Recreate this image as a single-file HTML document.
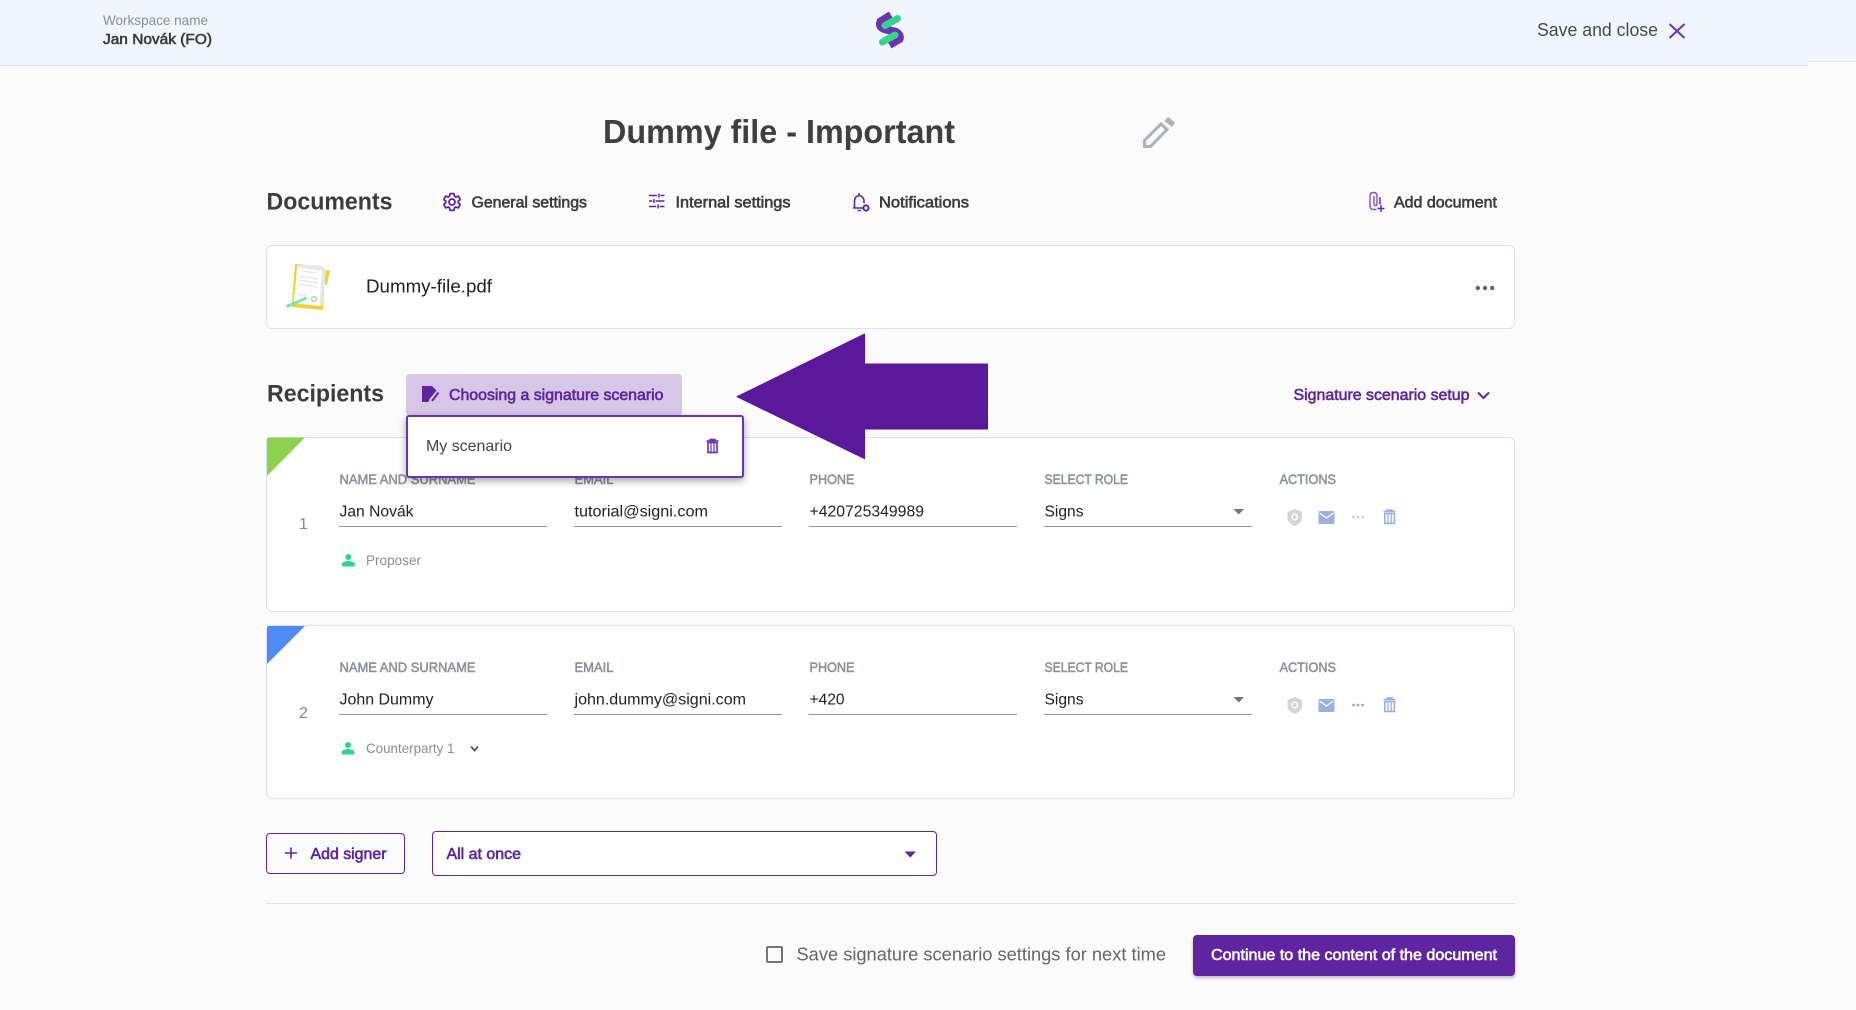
<!DOCTYPE html>
<html lang="en">
<head>
<meta charset="utf-8">
<title>Dummy file - Important</title>
<style>
html,body{margin:0;padding:0;width:1856px;height:1010px;overflow:hidden;background:#fbfbfb}
.b{position:absolute;box-sizing:border-box}
svg{position:absolute;left:0;top:0}
text{font-family:"Liberation Sans",sans-serif}
.m{stroke:currentColor;stroke-width:.6px}
.h{font-weight:bold;stroke:none}
.lab{font-size:14px;fill:#8a9299;color:#8a9299;stroke:currentColor;stroke-width:.55px}
.val{font-size:16px;fill:#222}
.pu{fill:#5f249f;color:#5f249f}
.dk{fill:#3c3c3c;color:#3c3c3c}
</style>
</head>
<body>
<div class="b" style="left:1808px;top:0;width:48px;height:62px;background:#f1f5fd;border-bottom:1px solid #dbe2ee"></div>
<div class="b" style="left:1808px;top:62px;width:48px;height:34px;background:#fcfcfc"></div>
<div class="b" style="left:0;top:0;width:1808px;height:66px;background:#f1f5fd;border-bottom:1px solid #dbe2ee"></div>

<div class="b" style="left:266px;top:245px;width:1249px;height:84px;background:#fff;border:1px solid #d8e2f0;border-radius:6px"></div>
<div class="b" style="left:266px;top:437px;width:1249px;height:175px;background:#fff;border:1px solid #d8e2f0;border-radius:6px"></div>
<div class="b" style="left:266px;top:625px;width:1249px;height:174px;background:#fff;border:1px solid #d8e2f0;border-radius:6px"></div>
<div class="b" style="left:406px;top:374px;width:276px;height:42px;background:#d5c7e5;border-radius:4px"></div>
<div class="b" style="left:266px;top:833px;width:139px;height:41px;border:1.5px solid #5f249f;border-radius:4px"></div>
<div class="b" style="left:432px;top:831px;width:505px;height:45px;background:#fff;border:1.5px solid #5f249f;border-radius:4px"></div>
<div class="b" style="left:266px;top:903px;width:1249px;height:1px;background:#e2e2e2"></div>
<div class="b" style="left:765.500px;top:945.500px;width:17px;height:17px;border:2px solid #757575;border-radius:2px"></div>
<div class="b" style="left:1193px;top:935px;width:322px;height:41px;background:#5f249f;border-radius:4px;box-shadow:0 2px 3px rgba(0,0,0,.25)"></div>

<svg width="1856" height="1010" viewBox="0 0 1856 1010">
  <!-- header -->
  <text x="103" y="25" font-size="14" fill="#8a8f93" textLength="105" lengthAdjust="spacingAndGlyphs">Workspace name</text>
  <text class="m dk" x="103" y="44" font-size="15" textLength="109" lengthAdjust="spacingAndGlyphs">Jan Novák (FO)</text>
  <path d="M891 15L880.500 21.500Q878.500 26.500 884 29L896 32Q901 35 899.500 39L889.500 45" fill="none" stroke="#6a35b5" stroke-width="8"/>
  <path d="M885 25.500L897.500 18.500M882.500 42L895 35" fill="none" stroke="#34d68a" stroke-width="7" stroke-linecap="round"/>
  <text x="1537" y="36" font-size="18" fill="#4a4a4a" textLength="121" lengthAdjust="spacingAndGlyphs">Save and close</text>
  <path d="M1669.500 24L1684.500 38M1684.500 24L1669.500 38" stroke="#6a35b5" stroke-width="2" fill="none"/>

  <!-- title -->
  <text class="h" x="603" y="143" font-size="33" fill="#3f3f3f" textLength="352" lengthAdjust="spacingAndGlyphs">Dummy file - Important</text>
  <path d="M1144.500 146.500V140.500L1161 124L1167 129.500L1150.500 146.500Z" fill="none" stroke="#a9b3ba" stroke-width="3"/>
  <path d="M1168 117L1175 122.500L1172 127L1164.500 121Z" fill="#a9b3ba"/>

  <!-- documents row -->
  <text class="h" x="266.500" y="209.500" font-size="24" fill="#3c3c3c" textLength="126" lengthAdjust="spacingAndGlyphs">Documents</text>
  <g transform="translate(441.500,191.500) scale(.875)" fill="none" stroke="#5f249f" stroke-width="2">
    <path d="M19.14 12.94c.04-.3.06-.61.06-.94 0-.32-.02-.64-.07-.94l2.03-1.58c.18-.14.23-.41.12-.61l-1.92-3.32c-.12-.22-.37-.29-.59-.22l-2.39.96c-.5-.38-1.03-.7-1.62-.94l-.36-2.54c-.04-.24-.24-.41-.48-.41h-3.84c-.24 0-.43.17-.47.41l-.36 2.54c-.59.24-1.13.57-1.62.94l-2.39-.96c-.22-.08-.47 0-.59.22L2.74 8.87c-.12.21-.08.47.12.61l2.03 1.58c-.05.3-.09.63-.09.94s.02.64.07.94l-2.03 1.58c-.18.14-.23.41-.12.61l1.92 3.32c.12.22.37.29.59.22l2.39-.96c.5.38 1.03.7 1.62.94l.36 2.54c.05.24.24.41.48.41h3.84c.24 0 .44-.17.47-.41l.36-2.54c.59-.24 1.13-.56 1.62-.94l2.39.96c.22.08.47 0 .59-.22l1.92-3.32c.12-.22.07-.47-.12-.61l-2.01-1.58z"/>
    <circle cx="12" cy="12" r="3.400"/>
  </g>
  <text class="m dk" x="471.500" y="207.500" font-size="16" textLength="115.500" lengthAdjust="spacingAndGlyphs">General settings</text>
  <g stroke="#5f249f" stroke-width="1.500" fill="none">
    <path d="M649 195.500H657M660.500 195.500H664.500M659 193.500V197.500"/>
    <path d="M649 201H652.500M655.500 201H664.500M654 199V203"/>
    <path d="M649 206.500H656M659.500 206.500H664.500M658 204.500V208.500"/>
  </g>
  <text class="m dk" x="675.500" y="207.500" font-size="16" textLength="115" lengthAdjust="spacingAndGlyphs">Internal settings</text>
  <path d="M853 208H863M854.500 208V201Q854.500 196.500 859 195.500V193Q859 195.500 859.500 195.500Q863.500 196.500 864 200.500V203" fill="none" stroke="#5f249f" stroke-width="1.600"/>
  <circle cx="866" cy="208" r="2.600" fill="none" stroke="#5f249f" stroke-width="2"/>
  <path d="M857.500 210.500H861" stroke="#5f249f" stroke-width="1.400"/>
  <text class="m dk" x="879" y="207.500" font-size="16" textLength="90" lengthAdjust="spacingAndGlyphs">Notifications</text>
  <path d="M1376.500 209.500H1373.500Q1370 209.500 1370 205.500V196Q1370 192.500 1373.500 192.500Q1377 192.500 1377 196V204Q1377 205.500 1375.500 205.500Q1374 205.500 1374 204V196" fill="none" stroke="#8a4cc0" stroke-width="1.400"/>
  <path d="M1380 204.500V197M1377.500 208.500H1384.500M1381 205V212" fill="none" stroke="#5f249f" stroke-width="1.400"/>
  <text class="m dk" x="1394" y="207.500" font-size="16" textLength="103" lengthAdjust="spacingAndGlyphs">Add document</text>

  <!-- document card -->
  <path d="M295 264L308 265L325 270L323 310L291.700 307Z" fill="#efcf3a"/>
  <path d="M325 270L330 270.500L327 285L325 285Z" fill="#efcf3a"/>
  <path d="M297 265L321 265.500L326 270L322 306L294 303Z" fill="#e6e6e6"/>
  <path d="M297.500 267L322 271L319.500 306L293.500 303Z" fill="#fdfdfb"/>
  <path d="M302 271L316 273M299 276L318 279M298.500 280L318 283M298.500 284L317 287M297.500 294L307 295.500" stroke="#e4e4e4" stroke-width="1.200" fill="none"/>
  <circle cx="314" cy="299" r="2.400" fill="none" stroke="#c0c0c0" stroke-width="1.300"/>
  <path d="M286.500 306.500L306.500 298" stroke="#7fe3b6" stroke-width="3"/>
  <text x="366" y="292.500" font-size="18" fill="#222" textLength="126" lengthAdjust="spacingAndGlyphs">Dummy-file.pdf</text>
  <g fill="#666"><circle cx="1477.800" cy="288" r="2.200"/><circle cx="1485" cy="288" r="2.200"/><circle cx="1492.200" cy="288" r="2.200"/></g>

  <!-- recipients row -->
  <text class="h" x="267" y="401.500" font-size="24" fill="#3c3c3c" textLength="117" lengthAdjust="spacingAndGlyphs">Recipients</text>
  <path d="M422 386H432L436.500 390.500L429.500 399L428.500 402H422Z" fill="#5f249f"/>
  <path d="M438.500 392.500L432 401" stroke="#5f249f" stroke-width="2"/>
  <text class="m pu" x="449" y="400" font-size="16" textLength="214.500" lengthAdjust="spacingAndGlyphs">Choosing a signature scenario</text>
  <text class="m pu" x="1293.500" y="400" font-size="16" textLength="176" lengthAdjust="spacingAndGlyphs">Signature scenario setup</text>
  <path d="M1478 392.500L1483.500 398L1489 392.500" fill="none" stroke="#5f249f" stroke-width="2"/>

  <!-- signer 1 -->
  <path d="M267 438.500Q267 437.500 269 437.500H305L267 476Z" fill="#8fd14f"/>
  <text class="lab" x="339.500" y="484" textLength="136" lengthAdjust="spacingAndGlyphs">NAME AND SURNAME</text>
  <text class="lab" x="574.500" y="484" textLength="39" lengthAdjust="spacingAndGlyphs">EMAIL</text>
  <text class="lab" x="809.500" y="484" textLength="45" lengthAdjust="spacingAndGlyphs">PHONE</text>
  <text class="lab" x="1044.500" y="484" textLength="83.500" lengthAdjust="spacingAndGlyphs">SELECT ROLE</text>
  <text class="lab" x="1279.500" y="484" textLength="56.500" lengthAdjust="spacingAndGlyphs">ACTIONS</text>
  <text x="299" y="529" font-size="16" fill="#888">1</text>
  <text class="val" x="339.500" y="516.500" textLength="74" lengthAdjust="spacingAndGlyphs">Jan Novák</text>
  <text class="val" x="574.500" y="516.500" textLength="133.500" lengthAdjust="spacingAndGlyphs">tutorial@signi.com</text>
  <text class="val" x="809.500" y="516.500" textLength="114.500" lengthAdjust="spacingAndGlyphs">+420725349989</text>
  <text class="val" x="1044.500" y="516.500" textLength="39" lengthAdjust="spacingAndGlyphs">Signs</text>
  <g fill="#949494">
    <rect x="339" y="526" width="208" height="1"/><rect x="574" y="526" width="208" height="1"/>
    <rect x="809" y="526" width="208" height="1"/><rect x="1044" y="526" width="208" height="1"/>
  </g>
  <path d="M1233.500 509H1244L1238.750 514.500Z" fill="#757575"/>
  <g fill="#2fd688"><circle cx="348.400" cy="557" r="3"/><path d="M342 566.500V564Q342 561.500 348.400 561Q354.700 561.500 354.700 564V566.500Z"/></g>
  <text x="366" y="565" font-size="14" fill="#8d8d8d" textLength="55" lengthAdjust="spacingAndGlyphs">Proposer</text>
  <g>
    <path d="M1294.800 509L1302 512V518Q1302 523 1294.800 526Q1287.500 523 1287.500 518V512Z" fill="#d5d5d5"/>
    <circle cx="1294.800" cy="517" r="2.700" fill="none" stroke="#fff" stroke-width="1.500"/>
    <rect x="1318.500" y="511" width="16" height="13" rx="1.500" fill="#9ab1df"/>
    <path d="M1319.500 513L1326.500 518L1333.500 513" fill="none" stroke="#fff" stroke-width="1.200"/>
    <g fill="#cfcfcf"><circle cx="1353.500" cy="517" r="1.400"/><circle cx="1358" cy="517" r="1.400"/><circle cx="1362.500" cy="517" r="1.400"/></g>
    <path d="M1383.500 511.500H1395.500M1387 511V510H1392V511" fill="none" stroke="#9ab1df" stroke-width="1.500"/>
    <rect x="1384.800" y="513.500" width="9.600" height="10" fill="none" stroke="#9ab1df" stroke-width="1.600"/>
    <path d="M1388 514V523M1391.200 514V523" stroke="#9ab1df" stroke-width="1.300"/>
  </g>

  <!-- signer 2 -->
  <path d="M267 627Q267 626 269 626H305L267 664Z" fill="#4f8bf5"/>
  <text class="lab" x="339.500" y="672" textLength="136" lengthAdjust="spacingAndGlyphs">NAME AND SURNAME</text>
  <text class="lab" x="574.500" y="672" textLength="39" lengthAdjust="spacingAndGlyphs">EMAIL</text>
  <text class="lab" x="809.500" y="672" textLength="45" lengthAdjust="spacingAndGlyphs">PHONE</text>
  <text class="lab" x="1044.500" y="672" textLength="83.500" lengthAdjust="spacingAndGlyphs">SELECT ROLE</text>
  <text class="lab" x="1279.500" y="672" textLength="56.500" lengthAdjust="spacingAndGlyphs">ACTIONS</text>
  <text x="299" y="718" font-size="16" fill="#888">2</text>
  <text class="val" x="339.500" y="704.500" textLength="94" lengthAdjust="spacingAndGlyphs">John Dummy</text>
  <text class="val" x="574.500" y="704.500" textLength="171.500" lengthAdjust="spacingAndGlyphs">john.dummy@signi.com</text>
  <text class="val" x="809.500" y="704.500" textLength="35" lengthAdjust="spacingAndGlyphs">+420</text>
  <text class="val" x="1044.500" y="704.500" textLength="39" lengthAdjust="spacingAndGlyphs">Signs</text>
  <g fill="#949494">
    <rect x="339" y="714" width="208" height="1"/><rect x="574" y="714" width="208" height="1"/>
    <rect x="809" y="714" width="208" height="1"/><rect x="1044" y="714" width="208" height="1"/>
  </g>
  <path d="M1233.500 697H1244L1238.750 702.500Z" fill="#757575"/>
  <g fill="#2fd688"><circle cx="348" cy="745" r="3"/><path d="M341.800 754.500V752Q341.800 749.500 348 749Q354.300 749.500 354.300 752V754.500Z"/></g>
  <text x="366" y="753" font-size="14" fill="#8d8d8d" textLength="88.500" lengthAdjust="spacingAndGlyphs">Counterparty 1</text>
  <path d="M471 746.500L474.500 750.500L478 746.500" fill="none" stroke="#5f249f" stroke-width="1.600"/>
  <g transform="translate(0,188)">
    <path d="M1294.800 509L1302 512V518Q1302 523 1294.800 526Q1287.500 523 1287.500 518V512Z" fill="#d5d5d5"/>
    <circle cx="1294.800" cy="517" r="2.700" fill="none" stroke="#fff" stroke-width="1.500"/>
    <rect x="1318.500" y="511" width="16" height="13" rx="1.500" fill="#9ab1df"/>
    <path d="M1319.500 513L1326.500 518L1333.500 513" fill="none" stroke="#fff" stroke-width="1.200"/>
    <g fill="#9aa8c8"><circle cx="1353.500" cy="517" r="1.400"/><circle cx="1358" cy="517" r="1.400"/><circle cx="1362.500" cy="517" r="1.400"/></g>
    <path d="M1383.500 511.500H1395.500M1387 511V510H1392V511" fill="none" stroke="#9ab1df" stroke-width="1.500"/>
    <rect x="1384.800" y="513.500" width="9.600" height="10" fill="none" stroke="#9ab1df" stroke-width="1.600"/>
    <path d="M1388 514V523M1391.200 514V523" stroke="#9ab1df" stroke-width="1.300"/>
  </g>

  <!-- bottom -->
  <path d="M291 847.500V858.500M285 853H297" stroke="#5f249f" stroke-width="1.600" fill="none"/>
  <text class="m pu" x="310.500" y="859" font-size="16" textLength="76" lengthAdjust="spacingAndGlyphs">Add signer</text>
  <text class="m pu" x="446.500" y="859" font-size="16" textLength="74.500" lengthAdjust="spacingAndGlyphs">All at once</text>
  <path d="M904.500 851.500H916L910.250 857.500Z" fill="#5f249f"/>
  <text x="796.500" y="960.500" font-size="18" fill="#666" textLength="369.500" lengthAdjust="spacingAndGlyphs">Save signature scenario settings for next time</text>
  <text class="m" x="1211" y="960" font-size="16" fill="#fff" color="#fff" textLength="286" lengthAdjust="spacingAndGlyphs">Continue to the content of the document</text>
</svg>

<!-- popup -->
<div class="b" style="left:406px;top:415px;width:337.500px;height:63px;background:#fff;border:2px solid #6a35b0;border-radius:3px;box-shadow:0 3px 8px rgba(0,0,0,.35)"></div>
<svg width="1856" height="1010" viewBox="0 0 1856 1010">
  <text x="426" y="451" font-size="16" fill="#444" textLength="86" lengthAdjust="spacingAndGlyphs">My scenario</text>
  <path d="M706.500 441H718.500M710 440.500V439.500H715V440.500" fill="none" stroke="#6530a8" stroke-width="1.500"/>
  <rect x="708" y="442.500" width="9" height="10" fill="none" stroke="#6530a8" stroke-width="1.600"/>
  <path d="M711 443V452M714 443V452" stroke="#6530a8" stroke-width="1.200"/>
  <path d="M737 396.700L864.600 334V364H987.500V429H864.600V458.700Z" fill="#5a189a" stroke="#5a189a" stroke-width="1" stroke-linejoin="round"/>
</svg>
</body>
</html>
